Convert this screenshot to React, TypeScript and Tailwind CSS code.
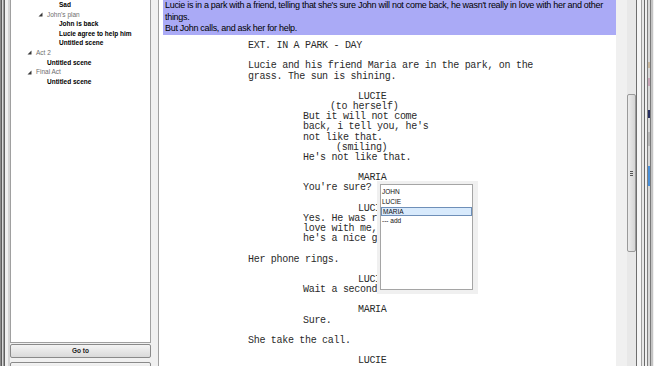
import React from "react";

type TreeRow = { label: string; kind: "scene" | "group"; pad: string };

const treeRows: TreeRow[] = [
  { label: "Sad", kind: "scene", pad: "pl-[48px]" },
  { label: "John's plan", kind: "group", pad: "pl-[27px]" },
  { label: "John is back", kind: "scene", pad: "pl-[48px]" },
  { label: "Lucie agree to help him", kind: "scene", pad: "pl-[48px]" },
  { label: "Untitled scene", kind: "scene", pad: "pl-[48px]" },
  { label: "Act 2", kind: "group", pad: "pl-[16px]" },
  { label: "Untitled scene", kind: "scene", pad: "pl-[36px]" },
  { label: "Final Act", kind: "group", pad: "pl-[16px]" },
  { label: "Untitled scene", kind: "scene", pad: "pl-[36px]" },
];

type Line = { t: string; pad: string };
const A = "pl-[89px]";
const C = "pl-[199px]";
const D = "pl-[144px]";
const P1 = "pl-[171px]";
const P2 = "pl-[177px]";

const script: Line[] = [
  { t: "EXT. IN A PARK - DAY", pad: A },
  { t: "", pad: A },
  { t: "Lucie and his friend Maria are in the park, on the", pad: A },
  { t: "grass. The sun is shining.", pad: A },
  { t: "", pad: A },
  { t: "LUCIE", pad: C },
  { t: "(to herself)", pad: P1 },
  { t: "But it will not come", pad: D },
  { t: "back, i tell you, he's", pad: D },
  { t: "not like that.", pad: D },
  { t: "(smiling)", pad: P2 },
  { t: "He's not like that.", pad: D },
  { t: "", pad: A },
  { t: "MARIA", pad: C },
  { t: "You're sure?", pad: D },
  { t: "", pad: A },
  { t: "LUCIE", pad: C },
  { t: "Yes. He was really in", pad: D },
  { t: "love with me, but now", pad: D },
  { t: "he's a nice guy.", pad: D },
  { t: "", pad: A },
  { t: "Her phone rings.", pad: A },
  { t: "", pad: A },
  { t: "LUCIE", pad: C },
  { t: "Wait a second.", pad: D },
  { t: "", pad: A },
  { t: "MARIA", pad: C },
  { t: "Sure.", pad: D },
  { t: "", pad: A },
  { t: "She take the call.", pad: A },
  { t: "", pad: A },
  { t: "LUCIE", pad: C },
];

function Tri() {
  return (
    <svg width="9" height="5" viewBox="0 0 9 5" className="shrink-0">
      <path d="M4.5 0.5 L4.5 4.5 L0.5 4.5 Z" fill="#3a3a3a" />
    </svg>
  );
}

function Button({ label }: { label: string }) {
  return (
    <div className="h-[14px] shrink-0 rounded-[2px] border border-[#8a8a8a] bg-gradient-to-b from-[#f4f4f4] to-[#dadada] flex items-center justify-center text-[6.5px] font-bold text-[#222]">
      {label}
    </div>
  );
}

export default function App() {
  return (
    <div
      className="w-[654px] h-[366px] flex overflow-hidden bg-[#f0f0f0]"
      style={{ fontFamily: '"Liberation Sans", Arial, sans-serif' }}
    >
      {/* left window edge */}
      <div className="flex shrink-0 h-full">
        <div className="w-px bg-[#8c8c8c]" />
        <div className="w-px bg-[#5c5c5c]" />
        <div className="w-px bg-[#d8d8d8]" />
        <div className="w-px bg-[#9a9a9a]" />
        <div className="w-px bg-[#606060]" />
        <div className="w-[3px] bg-[#f0f0f0]" />
        <div className="w-[2px] bg-[#d4d4d4]" />
      </div>

      {/* left panel */}
      <div className="w-[141px] shrink-0 flex flex-col">
        <div className="h-[343px] shrink-0 border border-t-0 border-[#a0a0a0] bg-white overflow-hidden">
          <div>
            {treeRows.map((r, i) => (
              <div
                key={i}
                className={`h-[9.63px] flex items-center whitespace-nowrap text-[6.5px] ${r.pad} ${
                  r.kind === "scene" ? "font-bold text-black" : "text-[#6e6e6e]"
                }`}
              >
                {r.kind === "group" && <Tri />}
                <span>{r.label}</span>
              </div>
            ))}
          </div>
        </div>
        <div className="mt-px">
          <Button label="Go to" />
        </div>
        <div className="mt-[4px]">
          <Button label="" />
        </div>
      </div>

      {/* splitter */}
      <div className="w-[7px] shrink-0 bg-[#f0f0f0]" />
      <div className="w-px shrink-0 bg-[#a0a0a0]" />

      {/* main editor */}
      <div className="w-[457px] shrink-0 h-full bg-white relative overflow-hidden">
        <div className="ml-[4px] h-[35px] bg-[#aaaaf6] text-[9px] leading-[11.5px] tracking-[-0.3px] text-black pl-[2px] whitespace-nowrap">
          Lucie is in a park with a friend, telling that she's sure John will not come back, he wasn't really in love with her and other
          <br />
          things.
          <br />
          But John calls, and ask her for help.
        </div>
        <div
          className="mt-[6px] text-[10px] leading-[10.18px] tracking-[-0.3px] text-[#2a2a2a]"
          style={{ fontFamily: '"Liberation Mono", "Courier New", monospace' }}
        >
          {script.map((l, i) => (
            <div key={i} className={`h-[10.18px] whitespace-pre ${l.pad}`}>
              {l.t}
            </div>
          ))}
        </div>

        {/* autocomplete popup */}
        <div className="absolute left-[218px] top-[181px] w-[101px] h-[113px] bg-[#f0f0f0] pt-[3px] pl-[3px] pr-[5px] pb-[4px] flex">
          <div className="flex-1 border border-[#a5a5a5] bg-white pt-[2px] text-[6.5px] text-[#111]">
            <div className="h-[10px] flex items-center pl-[1px]">JOHN</div>
            <div className="h-[10px] flex items-center pl-[1px]">LUCIE</div>
            <div className="h-[9px] flex items-center pl-[1px] bg-[#d8eafc] border border-[#6e8fb8]">MARIA</div>
            <div className="h-[10px] flex items-center pl-[1px]">--- add</div>
          </div>
        </div>
      </div>

      {/* scrollbar */}
      <div className="w-[20px] shrink-0 h-full flex">
        <div className="w-[11px] bg-[#f0f0f0]" />
        <div className="w-[9px] bg-[#e8e8e8] pt-[94px]">
          <div className="h-[158px] w-[9px] rounded-[2px] border border-[#9a9a9a] bg-gradient-to-r from-[#ececec] to-[#d4d4d4] flex flex-col items-center justify-center gap-[1px]">
            <div className="w-[3px] h-px bg-[#555]" />
            <div className="w-[3px] h-px bg-[#555]" />
            <div className="w-[3px] h-px bg-[#555]" />
          </div>
        </div>
      </div>

      {/* right window edges */}
      <div className="flex shrink-0 h-full">
        <div className="w-px bg-[#6e6e6e]" />
        <div className="w-[4px] bg-[#f6f6f6]" />
        <div className="w-px bg-[#a0a0a0]" />
        <div className="w-[2px] bg-[#e8e8e8]" />
        <div className="w-px bg-[#6a6a6a]" />
        <div className="w-[2px] bg-[#f0f0f0]" />
        <div className="w-px bg-[#808080]" />
        <div className="w-[2px] flex flex-col bg-[#d8d8d8]">
          <div className="h-[62px]" />
          <div className="h-[6px] bg-[#c8b8a0]" />
          <div className="h-[10px] bg-[#d8d8d8]" />
          <div className="h-[8px] bg-[#c8a8b8]" />
          <div className="h-[24px] bg-[#d8d8d8]" />
          <div className="h-[8px] bg-[#283060]" />
          <div className="h-[14px] bg-[#d8d8d8]" />
          <div className="h-[14px] bg-[#b8b8b8]" />
          <div className="h-[20px] bg-[#d8d8d8]" />
          <div className="h-[20px] bg-[#4a90d8]" />
        </div>
        <div className="w-px bg-[#7a7a7a]" />
        <div className="w-[2px] bg-[#c4c4c4]" />
      </div>
    </div>
  );
}
